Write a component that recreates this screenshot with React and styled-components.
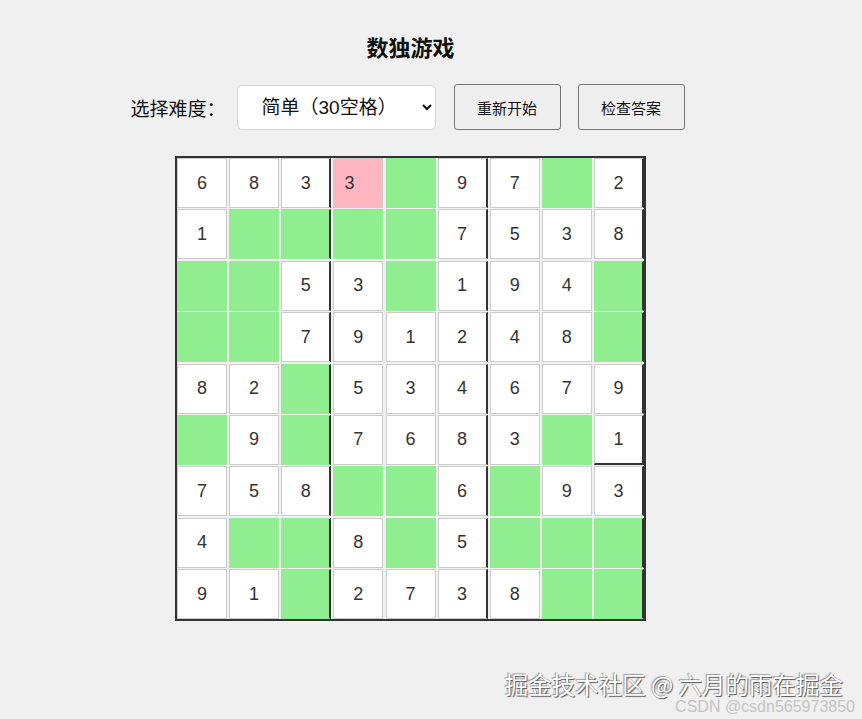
import React, { useState } from "react";
import styled, { createGlobalStyle } from "styled-components";

const GlobalStyle = createGlobalStyle`
  html, body {
    margin: 0;
    padding: 0;
    background: #f0f0f0;
    font-family: "Liberation Sans", "Noto Sans CJK SC", sans-serif;
  }
`;

// 0 = empty cell, waiting for input
const puzzle = [
  [6, 8, 3, 3, 0, 9, 7, 0, 2],
  [1, 0, 0, 0, 0, 7, 5, 3, 8],
  [0, 0, 5, 3, 0, 1, 9, 4, 0],
  [0, 0, 7, 9, 1, 2, 4, 8, 0],
  [8, 2, 0, 5, 3, 4, 6, 7, 9],
  [0, 9, 0, 7, 6, 8, 3, 0, 1],
  [7, 5, 8, 0, 0, 6, 0, 9, 3],
  [4, 0, 0, 8, 0, 5, 0, 0, 0],
  [9, 1, 0, 2, 7, 3, 8, 0, 0],
];

// cells typed by the player that conflict
const wrong = { "0-3": true };

export default function App() {
  const [level, setLevel] = useState("easy");

  return (
    <>
      <GlobalStyle />
      <Page>
        <Title>数独游戏</Title>
        <Controls>
          <Label>选择难度：</Label>
          <Select value={level} onChange={(e) => setLevel(e.target.value)}>
            <option value="easy">简单（30空格）</option>
            <option value="medium">中等（40空格）</option>
            <option value="hard">困难（50空格）</option>
          </Select>
          <Button type="button">重新开始</Button>
          <Button type="button">检查答案</Button>
        </Controls>

        <Board>
          {puzzle.map((row, r) =>
            row.map((n, c) => {
              const key = `${r}-${c}`;
              const kind = wrong[key] ? "wrong" : n === 0 ? "empty" : "given";
              return (
                <Cell
                  key={key}
                  $kind={kind}
                  $boxRight={c === 2 || c === 5 || c === 8}
                  $darkBottom={r === 5 && c === 8}
                >
                  {n !== 0 ? n : ""}
                </Cell>
              );
            })
          )}
        </Board>
      </Page>

      <Watermark>
        <WatermarkMain>掘金技术社区 @ 六月的雨在掘金</WatermarkMain>
        <WatermarkSub>CSDN @csdn565973850</WatermarkSub>
      </Watermark>
    </>
  );
}

const Page = styled.div`
  width: 821px;
  display: flex;
  flex-direction: column;
  align-items: center;
  padding-top: 31px;
`;

const Title = styled.h2`
  margin: 0;
  font-family: "Noto Sans CJK SC", sans-serif;
  font-size: 22px;
  font-weight: bold;
  line-height: 30px;
  color: #111;
`;

const Controls = styled.div`
  display: flex;
  align-items: center;
  margin-top: 23px;
  margin-left: -6px;
`;

const Label = styled.span`
  font-family: "Noto Sans CJK SC", sans-serif;
  font-size: 19px;
  color: #111;
  margin-right: 11px;
`;

const Select = styled.select`
  width: 199px;
  height: 45px;
  padding: 0 8px 0 20px;
  font-family: "Liberation Sans", "Noto Sans CJK SC", sans-serif;
  font-size: 19px;
  color: #111;
  background: #fff;
  border: 1px solid #d6d6d6;
  border-radius: 5px;
  margin-right: 18px;
`;

const Button = styled.button`
  width: 107px;
  height: 46px;
  padding: 0;
  font-family: "Noto Sans CJK SC", sans-serif;
  font-size: 15px;
  color: #111;
  background: #efefef;
  border: 1px solid #767676;
  border-radius: 3px;
  margin-right: 17px;

  &:last-child {
    margin-right: 0;
  }
`;

const Board = styled.div`
  display: grid;
  grid-template-columns: repeat(9, 50px);
  grid-auto-rows: 50px;
  column-gap: 2.125px;
  row-gap: 1.4px;
  margin-top: 26px;
  border: 2px solid #333;
`;

const cellBg = {
  given: "#fff",
  empty: "#90ee90",
  wrong: "#ffb6c1",
};

const Cell = styled.div`
  box-sizing: border-box;
  display: flex;
  align-items: center;
  justify-content: ${(p) => (p.$kind === "wrong" ? "flex-start" : "center")};
  padding-left: ${(p) => (p.$kind === "wrong" ? "10px" : "0")};
  background: ${(p) => cellBg[p.$kind]};
  border: 1px solid ${(p) => (p.$kind === "empty" ? "#90ee90" : "#ccc")};
  border-right: ${(p) => (p.$boxRight ? "2px solid #333" : undefined)};
  border-bottom: ${(p) => (p.$darkBottom ? "2px solid #333" : undefined)};
  font-size: 18px;
  color: #333;
`;

const Watermark = styled.div`
  position: absolute;
  right: 7px;
  bottom: 5px;
  display: flex;
  flex-direction: column;
  align-items: flex-end;
  pointer-events: none;
`;

const WatermarkMain = styled.div`
  font-family: "Noto Sans CJK SC", sans-serif;
  font-size: 23.5px;
  line-height: 23px;
  color: #fff;
  margin-right: 12px;
  margin-bottom: 3px;
  text-shadow: 1px 1px 1px #555, -1px -1px 1px #999;
`;

const WatermarkSub = styled.div`
  font-family: "Liberation Sans", sans-serif;
  font-size: 16px;
  line-height: 15px;
  color: #c4c4c4;
`;
